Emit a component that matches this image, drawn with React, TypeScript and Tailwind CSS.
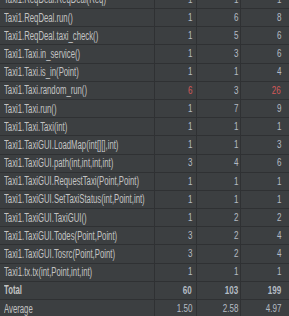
const rows: [string, string, string, string, boolean?][] = [
  ["Taxi1.ReqDeal.ReqDeal(Req)", "1", "1", "1"],
  ["Taxi1.ReqDeal.run()", "1", "6", "8"],
  ["Taxi1.ReqDeal.taxi_check()", "1", "5", "6"],
  ["Taxi1.Taxi.in_service()", "1", "3", "6"],
  ["Taxi1.Taxi.is_in(Point)", "1", "1", "4"],
  ["Taxi1.Taxi.random_run()", "6", "3", "26", true],
  ["Taxi1.Taxi.run()", "1", "7", "9"],
  ["Taxi1.Taxi.Taxi(int)", "1", "1", "1"],
  ["Taxi1.TaxiGUI.LoadMap(int[][],int)", "1", "1", "3"],
  ["Taxi1.TaxiGUI.path(int,int,int,int)", "3", "4", "6"],
  ["Taxi1.TaxiGUI.RequestTaxi(Point,Point)", "1", "1", "1"],
  ["Taxi1.TaxiGUI.SetTaxiStatus(int,Point,int)", "1", "1", "1"],
  ["Taxi1.TaxiGUI.TaxiGUI()", "1", "2", "2"],
  ["Taxi1.TaxiGUI.Todes(Point,Point)", "3", "2", "4"],
  ["Taxi1.TaxiGUI.Tosrc(Point,Point)", "3", "2", "4"],
  ["Taxi1.tx.tx(int,Point,int,int)", "1", "1", "1"],
];

function Num({ v, className }: { v: string; className: string }) {
  return <span className={`inline-block origin-right scale-x-[0.7] whitespace-nowrap ${className}`}>{v}</span>;
}

function Row({ cells, red, bold }: { cells: string[]; red?: boolean; bold?: boolean }) {
  const numColor = "text-[#b4bcc4]";
  const redColor = red ? "text-[#d45a5a]" : numColor;
  return (
    <div className={`flex h-[18.2px] items-center border-b border-[#2f3133] ${bold ? "font-bold" : ""}`}>
      <div className="flex h-full w-[155px] items-center overflow-hidden border-r border-[#2f3133] pl-[4px] text-[12px] text-[#c3c3c3]">
        <span className="inline-block origin-left scale-x-[0.645] whitespace-nowrap">{cells[0]}</span>
      </div>
      <div className="flex h-full w-[42px] items-center justify-end border-r border-[#2f3133] pr-[4px]">
        <Num v={cells[1]} className={redColor} />
      </div>
      <div className="flex h-full w-[44px] items-center justify-end border-r border-[#2f3133] pr-[2px]">
        <Num v={cells[2]} className={numColor} />
      </div>
      <div className="flex h-full flex-1 items-center justify-end pr-[8px]">
        <Num v={cells[3]} className={redColor} />
      </div>
    </div>
  );
}

export default function App() {
  return (
    <div
      className="h-[316px] w-[289px] overflow-hidden bg-[#3c3f41] text-[11.5px] leading-none"
      style={{ fontFamily: '"Liberation Sans", sans-serif' }}
    >
      <div className="-mt-[9.2px]">
        {rows.map((r) => (
          <Row key={r[0]} cells={[r[0], r[1], r[2], r[3]]} red={r[4]} />
        ))}
        <Row cells={["Total", "60", "103", "199"]} bold />
        <Row cells={["Average", "1.50", "2.58", "4.97"]} />
      </div>
    </div>
  );
}
